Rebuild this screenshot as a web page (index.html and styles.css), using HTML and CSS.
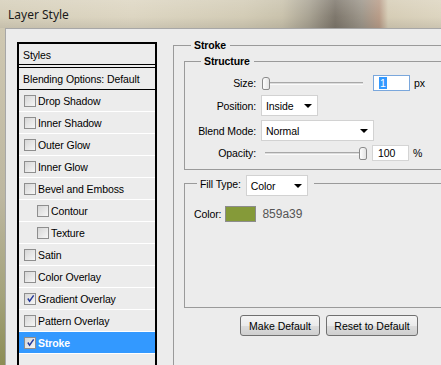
FILE: index.html
```html
<!DOCTYPE html>
<html lang="en">
<head>
  <meta charset="UTF-8">
  <title>Layer Style</title>
  <link rel="stylesheet" href="styles.css">
</head>
<body>
  <div class="window">
    <!-- title bar -->
    <div class="titlebar">
      <span class="title">Layer Style</span>
    </div>

    <div class="frame">
      <div class="dialog">
        <!-- styles list -->
        <div class="styles-panel">
          <div class="panel-head">Styles</div>
          <div class="panel-blend">Blending Options: Default</div>
          <ul class="fx-list">
            <li class="fx"><span class="check"></span>Drop Shadow</li>
            <li class="fx"><span class="check"></span>Inner Shadow</li>
            <li class="fx"><span class="check"></span>Outer Glow</li>
            <li class="fx"><span class="check"></span>Inner Glow</li>
            <li class="fx"><span class="check"></span>Bevel and Emboss</li>
            <li class="fx fx-sub"><span class="check"></span>Contour</li>
            <li class="fx fx-sub"><span class="check"></span>Texture</li>
            <li class="fx"><span class="check"></span>Satin</li>
            <li class="fx"><span class="check"></span>Color Overlay</li>
            <li class="fx"><span class="check"><svg viewBox="0 0 10 10"><polyline points="2,5 4,8 8.5,1.5"/></svg></span>Gradient Overlay</li>
            <li class="fx"><span class="check"></span>Pattern Overlay</li>
            <li class="fx active"><span class="check"><svg viewBox="0 0 10 10"><polyline points="2,5 4,8 8.5,1.5"/></svg></span>Stroke</li>
          </ul>
        </div>

        <!-- stroke settings -->
        <div class="stroke-group">
          <div class="group-head head-stroke"><span class="group-title">Stroke</span></div>
          <div class="stroke-body">

            <div class="structure">
              <div class="group-head head-structure"><span class="group-title">Structure</span></div>
              <div class="structure-body">
                <div class="form">
                  <label class="form-label">Size:</label>
                  <div class="form-field">
                    <div class="slider slider-size">
                      <span class="thumb"></span>
                      <span class="track"></span>
                    </div>
                    <span class="input input-focus"><span class="sel">1</span></span>
                    <span class="unit">px</span>
                  </div>

                  <label class="form-label">Position:</label>
                  <div class="form-field">
                    <div class="select select-position"><span>Inside</span><span class="arrow"></span></div>
                  </div>

                  <label class="form-label">Blend Mode:</label>
                  <div class="form-field">
                    <div class="select select-blend"><span>Normal</span><span class="arrow"></span></div>
                  </div>

                  <label class="form-label">Opacity:</label>
                  <div class="form-field">
                    <div class="slider slider-opacity">
                      <span class="track"></span>
                      <span class="thumb"></span>
                    </div>
                    <span class="input input-opacity">100</span>
                    <span class="unit">%</span>
                  </div>
                </div>
              </div>
            </div>

            <div class="fill">
              <div class="fill-head">
                <span class="fill-title">Fill Type:</span>
                <div class="select select-fill"><span>Color</span><span class="arrow"></span></div>
              </div>
              <div class="fill-body">
                <div class="color-row">
                  <span class="color-label">Color:</span>
                  <span class="swatch"></span>
                  <span class="color-hex">859a39</span>
                </div>
              </div>
            </div>

            <div class="buttons">
              <button class="btn btn-make">Make Default</button>
              <button class="btn btn-reset">Reset to Default</button>
            </div>

          </div>
        </div>
      </div>
    </div>
  </div>
</body>
</html>
```

FILE: styles.css
```css
* {
  margin: 0;
  padding: 0;
  box-sizing: border-box;
}

body {
  width: 441px;
  height: 365px;
  overflow: hidden;
  font-family: 'Liberation Sans', Arial, sans-serif;
  font-size: 10.5px;
  letter-spacing: -0.1px;
  color: #000;
  background: #ececec;
}

.window {
  display: flex;
  flex-direction: column;
  height: 365px;
}

/* title bar */
.titlebar {
  height: 28px;
  flex: none;
  display: flex;
  align-items: center;
  padding-left: 8px;
  background:
    linear-gradient(to bottom, rgba(255, 255, 255, 0.15) 0%, rgba(0, 0, 0, 0) 60%, rgba(0, 0, 0, 0.08) 100%),
    linear-gradient(to right, #d6cfba 0%, #ddd6c2 30%, #d3ccb6 55%, #c9c2ac 64%, #a9a393 70%, #7e776c 76%, #9d968a 82%, #b89c88 86%, #d6cdb6 88%, #ddd5c0 100%);
}

.title {
  font-family: 'Noto Sans', 'Liberation Sans', sans-serif;
  font-size: 12px;
  letter-spacing: 0;
  color: #1a1a1a;
}

.frame {
  flex: 1;
  display: flex;
  background: linear-gradient(to bottom, #cfc8b2 0%, #bdb7a0 50%, #a3a27a 80%, #8c8d55 100%);
  padding-left: 5px;
}

.dialog {
  flex: 1;
  display: flex;
  background: #ececec;
  border-left: 1px solid #a7a7a7;
  border-top: 1px solid #a7a7a7;
  padding-left: 11px;
}

/* styles list */
.styles-panel {
  width: 140px;
  flex: none;
  margin-top: 13px;
  border: 2px solid #000;
  border-bottom: none;
  background: #ececec;
}

.panel-head {
  height: 24px;
  padding: 5px 0 0 4px;
  border-bottom: 4px double #000;
}

.panel-blend {
  height: 22px;
  padding: 5px 0 0 4px;
  border-bottom: 1px solid #000;
}

.fx-list {
  list-style: none;
}

.fx {
  height: 22px;
  display: flex;
  align-items: center;
  padding-left: 5px;
  border-bottom: 1px solid #fff;
}

.fx-sub {
  padding-left: 18px;
}

.check {
  width: 12px;
  height: 12px;
  margin-right: 2px;
  border: 1px solid #8e8e8e;
  background: linear-gradient(135deg, #d6d6d6 0%, #f6f6f6 100%);
  display: flex;
  align-items: center;
  justify-content: center;
}

.check svg {
  width: 9px;
  height: 9px;
  fill: none;
  stroke: #24399a;
  stroke-width: 1.6;
}

.fx.active {
  background: #3399ff;
  color: #fff;
  font-weight: bold;
}

/* group boxes */
.group-head {
  display: flex;
  align-items: flex-start;
  height: 14px;
}

.group-head::before {
  content: '';
  height: 7px;
  margin-top: 7px;
  border-top: 1px solid #9a9a9a;
  border-left: 1px solid #9a9a9a;
}

.group-head::after {
  content: '';
  flex: 1;
  margin-top: 7px;
  border-top: 1px solid #9a9a9a;
}

.group-title {
  font-weight: bold;
  padding: 0 4px 0 3px;
  line-height: 14px;
}

.stroke-group {
  flex: 1;
  display: flex;
  flex-direction: column;
  margin: 9px 0 0 16px;
}

.head-stroke::before {
  width: 17px;
}

.stroke-body {
  flex: 1;
  border-left: 1px solid #9a9a9a;
  padding-left: 10px;
  padding-top: 2px;
}

.head-structure::before {
  width: 16px;
}

.structure-body {
  border-left: 1px solid #9a9a9a;
  border-bottom: 1px solid #9a9a9a;
  padding: 7px 0 8px 0;
}

/* structure form */
.form {
  display: grid;
  grid-template-columns: 71px auto;
  grid-template-rows: 16px 21px 21px 16px;
  column-gap: 5px;
  row-gap: 4px;
  align-items: center;
}

.form-label {
  text-align: right;
}

.form-field {
  display: flex;
  align-items: center;
  height: 100%;
}

.slider {
  display: flex;
  align-items: center;
  height: 16px;
}

.slider-size {
  width: 103px;
}

.slider-size .thumb {
  margin-left: 1px;
}

.slider-size .track {
  margin-right: 1px;
}

.slider-opacity {
  width: 106px;
}

.slider-opacity .track {
  margin-left: 4px;
}

.track {
  flex: 1;
  height: 3px;
  border-top: 1px solid #a8a8a8;
  border-bottom: 1px solid #fafafa;
  background: #dcdcdc;
}

.thumb {
  width: 8px;
  height: 13px;
  border: 1px solid #8a8a8a;
  border-radius: 3px 3px 2px 2px;
  background: linear-gradient(to right, #fdfdfd 0%, #e4e4e4 100%);
}

.input {
  width: 37px;
  height: 16px;
  background: #fff;
  border: 1px solid #d4d4d4;
  padding-left: 5px;
  line-height: 14px;
}

.input-focus {
  margin-left: 9px;
  border-color: #7aa7dc;
}

.input-opacity {
  margin-left: 5px;
}

.sel {
  background: #3399ff;
  color: #fff;
  padding: 0 1px;
}

.unit {
  margin-left: 4px;
}

.select {
  height: 21px;
  background: #fff;
  border: 1px solid #d2d2d2;
  display: flex;
  align-items: center;
  justify-content: space-between;
  padding: 1px 5px 0 4px;
}

.select-position {
  width: 57px;
}

.select-blend {
  width: 113px;
}

.arrow {
  width: 0;
  height: 0;
  border-left: 4px solid transparent;
  border-right: 4px solid transparent;
  border-top: 4px solid #000;
}

/* fill type */
.fill {
  margin-top: 5px;
}

.fill-head {
  display: flex;
  align-items: flex-start;
  height: 21px;
}

.fill-head::before {
  content: '';
  width: 12px;
  height: 13px;
  margin-top: 8px;
  border-top: 1px solid #9a9a9a;
  border-left: 1px solid #9a9a9a;
}

.fill-head::after {
  content: '';
  flex: 1;
  margin-top: 8px;
  border-top: 1px solid #9a9a9a;
}

.fill-title {
  padding: 3px 0 0 3px;
}

.select-fill {
  width: 62px;
  margin: 0 6px 0 5px;
}

.fill-body {
  height: 112px;
  border-left: 1px solid #9a9a9a;
  border-bottom: 1px solid #9a9a9a;
  padding: 10px 0 0 9px;
}

.color-row {
  display: flex;
  align-items: center;
}

.swatch {
  width: 31px;
  height: 16px;
  margin-left: 4px;
  background: #859a39;
  border: 1px solid #8c8c8c;
}

.color-hex {
  margin-left: 6px;
  font-size: 12px;
  letter-spacing: 0;
  color: #555;
}

/* buttons */
.buttons {
  display: flex;
  gap: 6px;
  margin-top: 7px;
  padding-left: 56px;
}

.btn {
  height: 21px;
  font-family: 'Liberation Sans', Arial, sans-serif;
  font-size: 10.5px;
  color: #000;
  border: 1px solid #707070;
  border-radius: 3px;
  background: linear-gradient(to bottom, #f4f4f4 0%, #ebebeb 50%, #dddddd 51%, #cfcfcf 100%);
}

.btn-make {
  width: 80px;
}

.btn-reset {
  width: 92px;
}
```
